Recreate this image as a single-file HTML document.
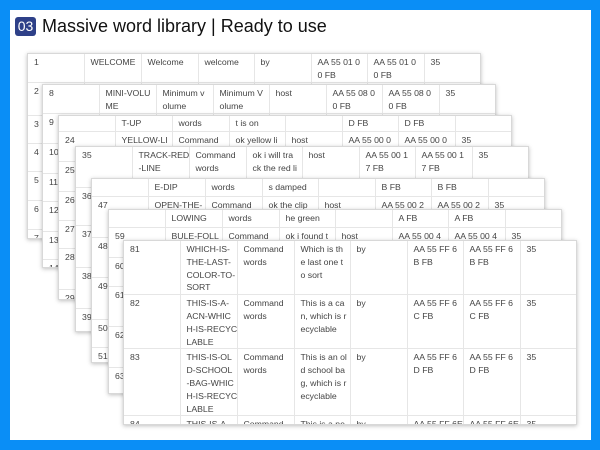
<!DOCTYPE html>
<html><head><meta charset="utf-8"><style>
*{margin:0;padding:0;box-sizing:border-box}
body{width:600px;height:450px;background:#0a8ef6;position:relative;overflow:hidden;font-family:"Liberation Sans",sans-serif}
#p{position:absolute;left:10px;top:10px;width:581px;height:430px;background:#fff}
#b{position:absolute;left:15px;top:17px;width:21px;height:19px;background:#2e4088;border-radius:3px;color:#fff;font-size:14px;line-height:19px;text-align:center}
#t{position:absolute;left:42px;top:16px;font-size:18px;color:#111;white-space:nowrap}
.c{position:absolute;width:454px;background:#fff;overflow:hidden;box-shadow:0 1px 4px rgba(0,0,0,.25);border:1px solid #d8d8d8}
table{border-collapse:collapse;table-layout:fixed;width:454px}
td{border-right:1px solid #e6e6e6;border-bottom:1px solid #e6e6e6;vertical-align:top;padding:2px 5px 0 6px;font-size:8.7px;line-height:12.8px;color:#444;overflow:hidden;white-space:nowrap}
</style></head><body>
<div id="p"></div>
<div id="b">03</div>
<div id="t">Massive word library | Ready to use</div>

<div class="c" style="left:27px;top:53px;height:186px"><table>
<colgroup><col style="width:56px"><col style="width:57px"><col style="width:57px"><col style="width:56px"><col style="width:57px"><col style="width:56px"><col style="width:57px"><col style="width:58px"></colgroup>
<tr style="height:27px"><td>1</td><td>WELCOME</td><td>Welcome</td><td>welcome</td><td>by</td><td>AA 55 01 0<br>0 FB</td><td>AA 55 01 0<br>0 FB</td><td>35</td></tr>
<tr style="height:33px"><td>2</td><td></td><td></td><td></td><td></td><td></td><td></td><td></td></tr>
<tr style="height:28px"><td>3</td><td></td><td></td><td></td><td></td><td></td><td></td><td></td></tr>
<tr style="height:28px"><td>4</td><td></td><td></td><td></td><td></td><td></td><td></td><td></td></tr>
<tr style="height:29px"><td>5</td><td></td><td></td><td></td><td></td><td></td><td></td><td></td></tr>
<tr style="height:29px"><td>6</td><td></td><td></td><td></td><td></td><td></td><td></td><td></td></tr>
<tr style="height:20px"><td>7</td><td></td><td></td><td></td><td></td><td></td><td></td><td></td></tr>
</table></div>

<div class="c" style="left:42px;top:84px;height:184px"><table>
<colgroup><col style="width:56px"><col style="width:57px"><col style="width:57px"><col style="width:56px"><col style="width:57px"><col style="width:56px"><col style="width:57px"><col style="width:58px"></colgroup>
<tr style="height:28px"><td>8</td><td>MINI-VOLU<br>ME</td><td>Minimum v<br>olume</td><td>Minimum V<br>olume</td><td>host</td><td>AA 55 08 0<br>0 FB</td><td>AA 55 08 0<br>0 FB</td><td>35</td></tr>
<tr style="height:30px"><td>9</td><td></td><td></td><td></td><td></td><td></td><td></td><td></td></tr>
<tr style="height:30px"><td>10</td><td></td><td></td><td></td><td></td><td></td><td></td><td></td></tr>
<tr style="height:28px"><td>11</td><td></td><td></td><td></td><td></td><td></td><td></td><td></td></tr>
<tr style="height:30px"><td>12</td><td></td><td></td><td></td><td></td><td></td><td></td><td></td></tr>
<tr style="height:28px"><td>13</td><td></td><td></td><td></td><td></td><td></td><td></td><td></td></tr>
<tr style="height:14px"><td>14</td><td></td><td></td><td></td><td></td><td></td><td></td><td></td></tr>
</table></div>

<div class="c" style="left:58px;top:115px;height:185px"><table>
<colgroup><col style="width:56px"><col style="width:57px"><col style="width:57px"><col style="width:56px"><col style="width:57px"><col style="width:56px"><col style="width:57px"><col style="width:58px"></colgroup>
<tr style="height:15px"><td style="padding-top:1px"></td><td style="padding-top:1px">T-UP</td><td style="padding-top:1px">words</td><td style="padding-top:1px">t is on</td><td></td><td style="padding-top:1px">D FB</td><td style="padding-top:1px">D FB</td><td></td></tr>
<tr style="height:30px"><td>24</td><td>YELLOW-LI</td><td>Command</td><td>ok yellow li</td><td>host</td><td>AA 55 00 0</td><td>AA 55 00 0</td><td>35</td></tr>
<tr style="height:30px"><td>25</td><td></td><td></td><td></td><td></td><td></td><td></td><td></td></tr>
<tr style="height:29px"><td>26</td><td></td><td></td><td></td><td></td><td></td><td></td><td></td></tr>
<tr style="height:28px"><td>27</td><td></td><td></td><td></td><td></td><td></td><td></td><td></td></tr>
<tr style="height:41px"><td>28</td><td></td><td></td><td></td><td></td><td></td><td></td><td></td></tr>
<tr style="height:12px"><td>29</td><td></td><td></td><td></td><td></td><td></td><td></td><td></td></tr>
</table></div>

<div class="c" style="left:75px;top:146px;height:186px"><table>
<colgroup><col style="width:56px"><col style="width:57px"><col style="width:57px"><col style="width:56px"><col style="width:57px"><col style="width:56px"><col style="width:57px"><col style="width:58px"></colgroup>
<tr style="height:40px"><td>35</td><td>TRACK-RED<br>-LINE</td><td>Command<br>words</td><td>ok i will tra<br>ck the red li<br>ne</td><td>host</td><td>AA 55 00 1<br>7 FB</td><td>AA 55 00 1<br>7 FB</td><td>35</td></tr>
<tr style="height:38px"><td>36</td><td></td><td></td><td></td><td></td><td></td><td></td><td></td></tr>
<tr style="height:42px"><td>37</td><td></td><td></td><td></td><td></td><td></td><td></td><td></td></tr>
<tr style="height:41px"><td>38</td><td></td><td></td><td></td><td></td><td></td><td></td><td></td></tr>
<tr style="height:27px"><td>39</td><td></td><td></td><td></td><td></td><td></td><td></td><td></td></tr>
</table></div>

<div class="c" style="left:91px;top:178px;height:185px"><table>
<colgroup><col style="width:56px"><col style="width:57px"><col style="width:57px"><col style="width:56px"><col style="width:57px"><col style="width:56px"><col style="width:57px"><col style="width:58px"></colgroup>
<tr style="height:17px"><td></td><td>E-DIP</td><td>words</td><td>s damped</td><td></td><td>B FB</td><td>B FB</td><td></td></tr>
<tr style="height:41px"><td>47</td><td>OPEN-THE-</td><td>Command</td><td>ok the clip</td><td>host</td><td>AA 55 00 2</td><td>AA 55 00 2</td><td>35</td></tr>
<tr style="height:40px"><td>48</td><td></td><td></td><td></td><td></td><td></td><td></td><td></td></tr>
<tr style="height:42px"><td>49</td><td></td><td></td><td></td><td></td><td></td><td></td><td></td></tr>
<tr style="height:28px"><td>50</td><td></td><td></td><td></td><td></td><td></td><td></td><td></td></tr>
<tr style="height:17px"><td>51</td><td></td><td></td><td></td><td></td><td></td><td></td><td></td></tr>
</table></div>

<div class="c" style="left:108px;top:209px;height:185px"><table>
<colgroup><col style="width:56px"><col style="width:57px"><col style="width:57px"><col style="width:56px"><col style="width:57px"><col style="width:56px"><col style="width:57px"><col style="width:58px"></colgroup>
<tr style="height:17px"><td></td><td>LOWING</td><td>words</td><td>he green</td><td></td><td>A FB</td><td>A FB</td><td></td></tr>
<tr style="height:30px"><td>59</td><td>BULE-FOLL</td><td>Command</td><td>ok i found t</td><td>host</td><td>AA 55 00 4</td><td>AA 55 00 4</td><td>35</td></tr>
<tr style="height:29px"><td>60</td><td></td><td></td><td></td><td></td><td></td><td></td><td></td></tr>
<tr style="height:40px"><td>61</td><td></td><td></td><td></td><td></td><td></td><td></td><td></td></tr>
<tr style="height:41px"><td>62</td><td></td><td></td><td></td><td></td><td></td><td></td><td></td></tr>
<tr style="height:28px"><td>63</td><td></td><td></td><td></td><td></td><td></td><td></td><td></td></tr>
</table></div>

<div class="c" style="left:123px;top:240px;height:185px"><table>
<colgroup><col style="width:56px"><col style="width:57px"><col style="width:57px"><col style="width:56px"><col style="width:57px"><col style="width:56px"><col style="width:57px"><col style="width:58px"></colgroup>
<tr style="height:53px"><td>81</td><td>WHICH-IS-<br>THE-LAST-<br>COLOR-TO-<br>SORT</td><td>Command<br>words</td><td>Which is th<br>e last one t<br>o sort</td><td>by</td><td>AA 55 FF 6<br>B FB</td><td>AA 55 FF 6<br>B FB</td><td>35</td></tr>
<tr style="height:54px"><td>82</td><td>THIS-IS-A-<br>ACN-WHIC<br>H-IS-RECYC<br>LABLE</td><td>Command<br>words</td><td>This is a ca<br>n, which is r<br>ecyclable</td><td>by</td><td>AA 55 FF 6<br>C FB</td><td>AA 55 FF 6<br>C FB</td><td>35</td></tr>
<tr style="height:67px"><td>83</td><td>THIS-IS-OL<br>D-SCHOOL<br>-BAG-WHIC<br>H-IS-RECYC<br>LABLE</td><td>Command<br>words</td><td>This is an ol<br>d school ba<br>g, which is r<br>ecyclable</td><td>by</td><td>AA 55 FF 6<br>D FB</td><td>AA 55 FF 6<br>D FB</td><td>35</td></tr>
<tr style="height:20px"><td>84</td><td>THIS-IS-A-</td><td>Command</td><td>This is a ne</td><td>by</td><td>AA 55 FF 6E</td><td>AA 55 FF 6E</td><td>35</td></tr>
</table></div>
</body></html>
